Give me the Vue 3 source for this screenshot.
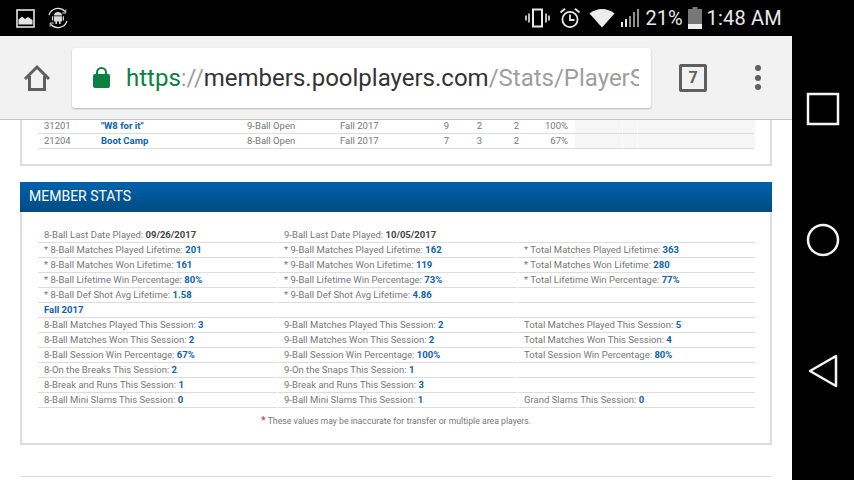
<script setup>
const teams = [
  { num: '31201', name: '"W8 for it"', format: '9-Ball Open', session: 'Fall 2017', a: 9, b: 2, c: 2, pct: '100%' },
  { num: '21204', name: 'Boot Camp', format: '8-Ball Open', session: 'Fall 2017', a: 7, b: 3, c: 2, pct: '67%' },
]

// each row has three cells, a cell is [label, value]
const stats = [
  [['8-Ball Last Date Played:', '09/26/2017', 'dark'], ['9-Ball Last Date Played:', '10/05/2017', 'dark'], null],
  [['* 8-Ball Matches Played Lifetime:', '201'], ['* 9-Ball Matches Played Lifetime:', '162'], ['* Total Matches Played Lifetime:', '363']],
  [['* 8-Ball Matches Won Lifetime:', '161'], ['* 9-Ball Matches Won Lifetime:', '119'], ['* Total Matches Won Lifetime:', '280']],
  [['* 8-Ball Lifetime Win Percentage:', '80%'], ['* 9-Ball Lifetime Win Percentage:', '73%'], ['* Total Lifetime Win Percentage:', '77%']],
  [['* 8-Ball Def Shot Avg Lifetime:', '1.58'], ['* 9-Ball Def Shot Avg Lifetime:', '4.86'], null],
  [['', 'Fall 2017'], null, null],
  [['8-Ball Matches Played This Session:', '3'], ['9-Ball Matches Played This Session:', '2'], ['Total Matches Played This Session:', '5']],
  [['8-Ball Matches Won This Session:', '2'], ['9-Ball Matches Won This Session:', '2'], ['Total Matches Won This Session:', '4']],
  [['8-Ball Session Win Percentage:', '67%'], ['9-Ball Session Win Percentage:', '100%'], ['Total Session Win Percentage:', '80%']],
  [['8-On the Breaks This Session:', '2'], ['9-On the Snaps This Session:', '1'], null],
  [['8-Break and Runs This Session:', '1'], ['9-Break and Runs This Session:', '3'], null],
  [['8-Ball Mini Slams This Session:', '0'], ['9-Ball Mini Slams This Session:', '1'], ['Grand Slams This Session:', '0']],
]
</script>

<template>
  <div class="phone">
    <div class="screen">
      <header class="status">
        <div class="status-left">
          <svg width="19" height="19" viewBox="0 0 19 19">
            <rect x="1" y="1" width="17" height="17" fill="none" stroke="#e4e4e4" stroke-width="1.6" />
            <path d="M2.5 15.5V10.5L6 7.5L9 10L12 8L16.5 11V15.5Z" fill="#e4e4e4" />
          </svg>
          <svg width="22" height="22" viewBox="0 0 22 22">
            <path d="M2 8A9.5 9.5 0 0 1 18 4.5M20 14A9.5 9.5 0 0 1 4 17.5" fill="none" stroke="#e4e4e4" stroke-width="1.2" />
            <path d="M18.8 2.5V6H15.3M3.2 19.5V16H6.7" fill="none" stroke="#e4e4e4" stroke-width="1" />
            <path d="M7 8.5A4 3.6 0 0 1 15 8.5ZM7 9.3H15V14.5H13.6V17H12V14.5H10V17H8.4V14.5H7ZM5 9.3H6.2V13.5H5ZM15.8 9.3H17V13.5H15.8Z" fill="#d8d8d8" />
          </svg>
        </div>
        <div class="status-right">
          <svg width="25" height="20" viewBox="0 0 25 20">
            <path d="M8 1.500H17V18.500H8Z" fill="none" stroke="#e8e8e8" stroke-width="2" />
            <path d="M4 5.500V14.500M1 7.500V12.500M21 5.500V14.500M24 7.500V12.500" stroke="#e8e8e8" stroke-width="1.600" fill="none" />
          </svg>
          <svg class="alarm" width="22" height="22" viewBox="0 0 22 22">
            <circle cx="11" cy="12.500" r="7.600" fill="none" stroke="#e8e8e8" stroke-width="1.800" />
            <path d="M11 7.500V13H15.500M1.500 5.500L6 1.800M20.500 5.500L16 1.800" fill="none" stroke="#e8e8e8" stroke-width="1.800" />
          </svg>
          <svg class="wifi" width="26" height="20" viewBox="0 0 26 20">
            <path d="M0.500 5.500C7.500 -0.500 18.500 -0.500 25.500 5.500L13 19.500Z" fill="#ededed" />
          </svg>
          <svg class="signal" width="18" height="20" viewBox="0 0 18 20">
            <path d="M0 14H2V19H0ZM4 11H6V19H4Z" fill="#e8e8e8" />
            <path d="M8 8H10V19H8ZM12 4H14V19H12ZM16 1H18V19H16Z" fill="#8e8e8e" />
          </svg>
          <span class="pct">21%</span>
          <svg class="battery" width="14" height="22" viewBox="0 0 14 22">
            <path d="M4.500 0H9.500V2H14V22H0V2H4.500Z" fill="#777" />
            <rect y="17" width="14" height="5" fill="#efefef" />
          </svg>
          <span class="clock">1:48 AM</span>
        </div>
      </header>

      <div class="toolbar">
        <svg class="home" width="28" height="28" viewBox="0 0 28 28">
          <path d="M2 15L14 3L26 15M6.500 12V25.500H21.500V12" fill="none" stroke="#5f5f5f" stroke-width="3" />
        </svg>
        <div class="url">
          <svg class="lock" width="17" height="21" viewBox="0 0 17 21">
            <path d="M4 8V5.500A4.500 4.500 0 0 1 13 5.500V8" fill="none" stroke="#0b8043" stroke-width="2" />
            <rect y="7" width="17" height="14" rx="2" fill="#0b8043" />
          </svg>
          <div class="url-text"><span class="https">https</span><span class="slashes">://</span><span class="host">members.poolplayers.com</span><span class="path">/Stats/PlayerS</span></div>
        </div>
        <div class="tabs">7</div>
        <div class="dots"><i></i><i></i><i></i></div>
      </div>

      <main class="page">
        <section class="panel teams">
          <div class="team-row" v-for="t in teams" :key="t.num">
            <span class="c-num">{{ t.num }}</span>
            <span class="c-name">{{ t.name }}</span>
            <span class="c-format">{{ t.format }}</span>
            <span class="c-session">{{ t.session }}</span>
            <span class="c-n1">{{ t.a }}</span>
            <span class="c-n2">{{ t.b }}</span>
            <span class="c-n3">{{ t.c }}</span>
            <span class="c-pct">{{ t.pct }}</span>
            <span class="c-g1"></span>
            <span class="c-g2"></span>
            <span class="c-g3"></span>
          </div>
        </section>

        <section class="stats">
          <h2>MEMBER STATS</h2>
          <div class="panel stats-body">
            <div class="stat-row" v-for="(row, i) in stats" :key="i">
              <div class="stat-cell" v-for="(cell, j) in row" :key="j">
                <template v-if="cell">
                  {{ cell[0] }} <b :class="cell[2]">{{ cell[1] }}</b>
                </template>
              </div>
            </div>
            <p class="note"><span class="star">*</span> These values may be inaccurate for transfer or multiple area players.</p>
          </div>
        </section>

        <hr class="next" />
      </main>
    </div>

    <nav class="softkeys">
      <svg width="34" height="34" viewBox="0 0 34 34"><rect x="2" y="2" width="30" height="30" fill="none" stroke="#f4f4f4" stroke-width="2.500" /></svg>
      <svg width="34" height="34" viewBox="0 0 34 34"><circle cx="17" cy="17" r="15" fill="none" stroke="#f4f4f4" stroke-width="2.500" /></svg>
      <svg width="30" height="34" viewBox="0 0 30 34"><path d="M28 2V32L2 17Z" fill="none" stroke="#f4f4f4" stroke-width="2.500" stroke-linejoin="round" /></svg>
    </nav>
  </div>
</template>

<style>
html, body { margin: 0; background: #000; }
</style>

<style scoped>
.phone {
  width: 854px;
  height: 480px;
  display: flex;
  overflow: hidden;
  background: #000;
  font-family: Roboto, "Liberation Sans", sans-serif;
}
.screen {
  width: 792px;
  display: flex;
  flex-direction: column;
  flex: none;
}
.status {
  height: 36px;
  flex: none;
  display: flex;
  justify-content: space-between;
  align-items: center;
  background: #000;
}
.status-left {
  display: flex;
  align-items: center;
  gap: 12px;
  padding-left: 16px;
}
.status-right {
  display: flex;
  align-items: center;
  padding-right: 10px;
  color: #e8e8e8;
}
.alarm { margin-left: 9px; }
.wifi { margin-left: 8px; }
.signal { margin-left: 6px; }
.pct { font-size: 20px; margin-left: 6px; }
.battery { margin-left: 5px; }
.clock { font-size: 20px; margin-left: 5px; letter-spacing: 0.2px; }

.toolbar {
  height: 84px;
  flex: none;
  display: flex;
  align-items: center;
  background: #f2f2f2;
  border-bottom: 1px solid #c4c4c4;
  box-sizing: border-box;
  position: relative;
  z-index: 1;
}
.home { margin-left: 23px; }
.url {
  width: 579px;
  height: 60px;
  margin-left: 21px;
  padding-left: 21px;
  box-sizing: border-box;
  display: flex;
  align-items: center;
  background: #fff;
  border-radius: 3px;
  box-shadow: 0 1px 2px rgba(0, 0, 0, 0.25);
  overflow: hidden;
}
.lock { flex: none; }
.url-text {
  margin-left: 16px;
  width: 513px;
  overflow: hidden;
  white-space: nowrap;
  font-size: 24px;
}
.https { color: #0b8043; }
.slashes, .path { color: #9e9e9e; }
.host { color: #333; }
.tabs {
  width: 28px;
  height: 28px;
  margin-left: 28px;
  border: 3px solid #5f5f5f;
  border-radius: 2px;
  box-sizing: border-box;
  display: flex;
  align-items: center;
  justify-content: center;
  color: #5f5f5f;
  font-size: 16px;
  font-weight: 700;
}
.dots {
  margin-left: 48px;
  display: flex;
  flex-direction: column;
  gap: 3.500px;
}
.dots i {
  width: 6px;
  height: 6px;
  border-radius: 50%;
  background: #5f5f5f;
}

.page {
  flex: 1;
  background: #fff;
  padding: 0 20px;
  min-height: 0;
  overflow: hidden;
  font-size: 9.500px;
  color: #777;
}
.panel {
  border: 2px solid #ddd;
  border-top: 0;
  box-sizing: border-box;
}
.teams {
  height: 47px;
  margin-top: -1px;
  padding: 0 16px;
}
.team-row {
  display: flex;
  height: 15px;
  line-height: 14px;
  box-sizing: border-box;
  border-bottom: 1px solid #ddd;
}
.team-row span { display: block; flex: none; box-sizing: border-box; }
.c-num { width: 62px; padding-left: 6px; }
.c-name { width: 147px; color: #0b62ad; font-weight: 700; padding-left: 1px; }
.c-format { width: 93px; }
.c-session { width: 90px; }
.c-n1 { width: 19px; text-align: right; }
.c-n2 { width: 33px; text-align: right; }
.c-n3 { width: 37px; text-align: right; }
.c-pct { width: 49px; text-align: right; }
.c-g1 { width: 47px; margin-left: 7px; background: #f6f6f6; }
.c-g2 { width: 14px; margin-left: 1px; background: #f6f6f6; }
.c-g3 { width: 117px; margin-left: 1px; background: #f6f6f6; }

.stats { margin-top: 16px; }
h2 {
  margin: 0;
  height: 30px;
  line-height: 29px;
  padding-left: 9px;
  font-size: 14px;
  font-weight: 400;
  color: #fff;
  background: linear-gradient(#0062ac, #004b82);
}
.stats-body {
  height: 233px;
  padding: 16px 16px 0;
}
.stat-row {
  display: grid;
  grid-template-columns: 239px 240px 238px;
  height: 15px;
}
.stat-cell {
  border-bottom: 1px solid #ddd;
  padding-left: 6px;
  line-height: 14px;
  white-space: nowrap;
  box-sizing: border-box;
}
.stat-cell + .stat-cell { margin-left: 1px; }
.stat-cell b { color: #0b62ad; font-weight: 700; }
.stat-cell b.dark { color: #444; }
.note {
  margin: 6px 0 0;
  text-align: center;
  font-size: 8.700px;
  line-height: 14px;
}
.star { color: #e03030; font-size: 11px; }
.next {
  margin: 31px 0 0;
  border: 0;
  border-top: 1px solid #ddd;
}

.softkeys {
  flex: 1;
  display: flex;
  flex-direction: column;
  align-items: center;
  justify-content: flex-start;
  gap: 97px;
  padding-top: 92px;
  background: #000;
}
</style>
